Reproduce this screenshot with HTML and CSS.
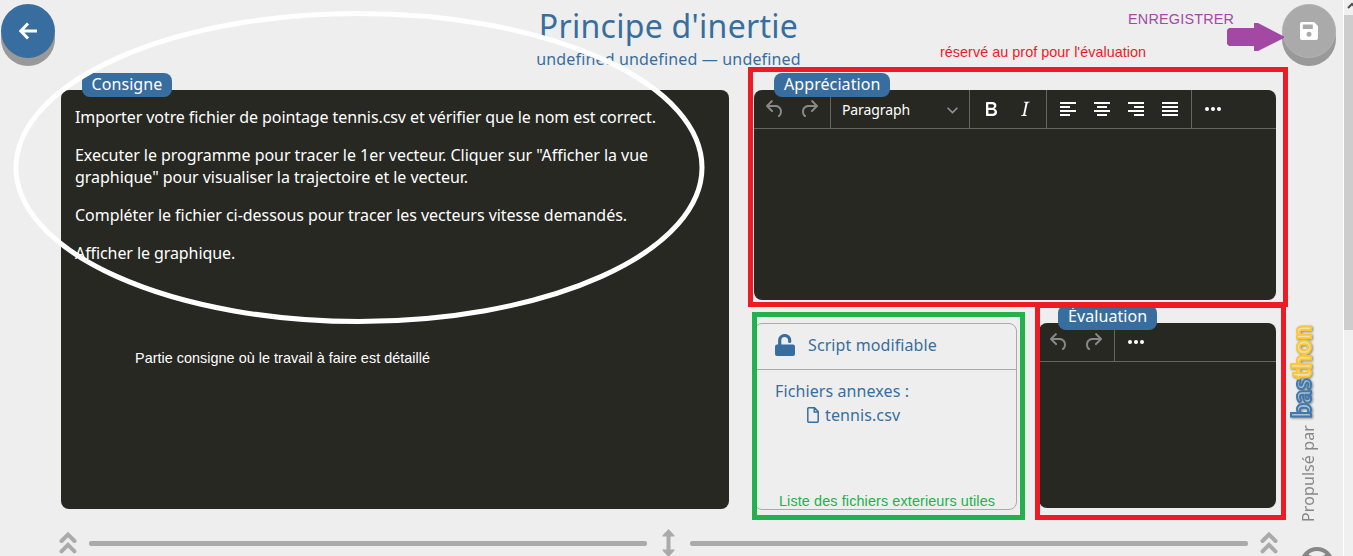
FILE: index.html
```html
<!DOCTYPE html>
<html lang="fr">
<head>
<meta charset="utf-8">
<title>Principe d'inertie</title>
<link rel="stylesheet" href="styles.css">
</head>
<body>
<svg class="defs" width="0" height="0">
  <symbol id="undo" viewBox="0 0 24 24"><path d="M6.4 8H12c3.7 0 6.2 2 6.8 5.1.6 2.7-.4 5.6-2.3 6.8a1 1 0 01-1-1.8c1.1-.6 1.8-2.7 1.4-4.6-.5-2.1-2.1-3.5-4.9-3.5H6.4l3.3 3.3a1 1 0 11-1.4 1.4l-5-5a1 1 0 010-1.4l5-5a1 1 0 011.4 1.4L6.4 8z"/></symbol>
  <symbol id="dots" viewBox="0 0 24 24"><circle cx="6" cy="12" r="2"/><circle cx="12" cy="12" r="2"/><circle cx="18" cy="12" r="2"/></symbol>
  <symbol id="up" viewBox="0 0 18 24"><path d="M2.500 10 9 3.500l6.500 6.500M2.500 20.300 9 13.800l6.500 6.500" fill="none" stroke="#aaa" stroke-width="4" stroke-linecap="round"/></symbol>
</svg>
<div class="page">
  <div class="left-rail">
    <button class="round back" aria-label="Retour"><svg width="20" height="20" viewBox="0 0 20 20"><path d="M10 2.500 2.800 10l7.200 7.500M3 10h16" fill="none" stroke="#fff" stroke-width="3"/></svg></button>
  </div>
  <main class="content">
    <header class="head">
      <h1>Principe d'inertie</h1>
      <p class="who">undefined undefined — undefined</p>
    </header>
    <div class="panels">
      <section class="panel consigne">
        <span class="tag">Consigne</span>
        <p class="tight">Importer votre fichier de pointage tennis.csv et vérifier que le nom est correct.</p>
        <p>Executer le programme pour tracer le 1er vecteur. Cliquer sur "Afficher la vue graphique" pour visualiser la trajectoire et le vecteur.</p>
        <p>Compléter le fichier ci-dessous pour tracer les vecteurs vitesse demandés.</p>
        <p class="tight">Afficher le graphique.</p>
      </section>
      <div class="side">
        <section class="panel appreciation">
          <span class="tag">Appréciation</span>
          <div class="toolbar">
            <div class="group dim"><i><svg><use href="#undo"/></svg></i><i class="flip"><svg><use href="#undo"/></svg></i></div>
            <div class="group select"><span>Paragraph</span><svg class="chev" viewBox="0 0 10 10"><path d="M.5 2.500 5 7l4.500-4.500" fill="none" stroke="#929390" stroke-width="1.500"/></svg></div>
            <div class="group">
              <i><svg viewBox="0 0 24 24"><path d="M7.800 19c-.3 0-.5 0-.6-.2l-.2-.5V5.700c0-.2 0-.4.2-.5l.6-.2h5c1.500 0 2.700.3 3.500 1 .7.6 1.100 1.400 1.100 2.500a3 3 0 01-.6 1.900c-.4.6-1 1-1.600 1.200.4.1.9.3 1.300.6s.8.7 1 1.200c.4.4.5 1 .5 1.600 0 1.300-.4 2.300-1.300 3-.8.7-2.100 1-3.800 1H7.800zm5-8.300c.6 0 1.200-.1 1.600-.5.4-.3.6-.7.6-1.300 0-1.100-.8-1.700-2.300-1.700H9.300v3.500h3.400zm.5 6c.7 0 1.300-.1 1.700-.4.4-.4.6-.9.6-1.500s-.2-1-.7-1.400c-.4-.3-1-.4-2-.4H9.400v3.800h4z"/></svg></i>
              <i><svg viewBox="0 0 24 24"><path d="M16.700 4.700l-.1.9h-.3c-.6 0-1 0-1.400.3-.3.3-.4.6-.5 1.100l-2.100 9.800v.6c0 .5.4.8 1.400.8h.2l-.2.8H8l.2-.8h.2c1.100 0 1.800-.5 2-1.500l2-9.800.1-.5c0-.6-.4-.8-1.400-.8h-.3l.2-.9h5.800z"/></svg></i>
            </div>
            <div class="group">
              <i><svg viewBox="0 0 24 24"><path d="M4 5h16v2H4zM4 9h10v2H4zM4 13h16v2H4zM4 17h10v2H4z"/></svg></i>
              <i><svg viewBox="0 0 24 24"><path d="M4 5h16v2H4zM7 9h10v2H7zM4 13h16v2H4zM7 17h10v2H7z"/></svg></i>
              <i><svg viewBox="0 0 24 24"><path d="M4 5h16v2H4zM10 9h10v2H10zM4 13h16v2H4zM10 17h10v2H10z"/></svg></i>
              <i><svg viewBox="0 0 24 24"><path d="M4 5h16v2H4zM4 9h16v2H4zM4 13h16v2H4zM4 17h16v2H4z"/></svg></i>
            </div>
            <div class="group last"><i><svg><use href="#dots"/></svg></i></div>
          </div>
        </section>
        <div class="lower">
          <section class="script">
            <div class="script-head">
              <svg width="20" height="22" viewBox="0 0 20 22"><rect x="0" y="10.500" width="20" height="11.500" rx="2"/><path d="M4.700 12V6.500a5 5 0 0 1 10 0V7.500" fill="none" stroke="#376e9f" stroke-width="3.200" stroke-linecap="round"/></svg>
              <span>Script modifiable</span>
            </div>
            <div class="files">
              <div>Fichiers annexes :</div>
              <div class="file"><svg width="12" height="16" viewBox="0 0 12 16"><path d="M1.700.8H7.500L11.200 4.500V14.300a.9.9 0 0 1-.9.9H1.700a.9.9 0 0 1-.9-.9V1.700a.9.9 0 0 1 .9-.9zM7.300 1V5H11" fill="none" stroke="#376e9f" stroke-width="1.500"/></svg><span>tennis.csv</span></div>
            </div>
          </section>
          <section class="panel evaluation">
            <span class="tag">Évaluation</span>
            <div class="toolbar">
              <div class="group dim"><i><svg><use href="#undo"/></svg></i><i class="flip"><svg><use href="#undo"/></svg></i></div>
              <div class="group last"><i><svg><use href="#dots"/></svg></i></div>
            </div>
          </section>
        </div>
      </div>
    </div>
    <div class="resizer">
      <svg width="18" height="24"><use href="#up"/></svg>
      <span class="line"></span>
      <svg class="updown" width="13" height="28" viewBox="0 0 13 28"><path d="M6.500 0 12.500 6.500V7.500H8.500V20.500H12.500V21.500L6.500 28 .5 21.500V20.500H4.500V7.500H.5V6.500z" fill="#aaa"/></svg>
      <span class="line"></span>
      <svg width="18" height="24"><use href="#up"/></svg>
    </div>
  </main>
  <aside class="right-rail">
    <button class="round save" aria-label="Enregistrer"><svg width="18" height="18" viewBox="0 0 18 18"><path fill="#fff" fill-rule="evenodd" d="M2 0h12l4 4v12a2 2 0 0 1-2 2H2a2 2 0 0 1-2-2V2a2 2 0 0 1 2-2zM2.800 2.500V7h10V2.500zM9 9.800a2.500 2.500 0 1 0 0 5 2.500 2.500 0 0 0 0-5z"/></svg></button>
    <div class="credit"><span class="by">Propulsé par</span><span class="logo"><b class="bas">bas</b><b class="thon">thon</b></span></div>
    <svg class="help" width="34" height="34" viewBox="0 0 34 34"><circle cx="17" cy="17" r="15" fill="none" stroke="#888" stroke-width="4"/><path d="M2 17V10L9 5V8L12 9L4 17zM32 17V10L25 5V8L22 9L30 17z" fill="#888"/></svg>
  </aside>
  <div class="scrollbar"><svg width="9" height="15" viewBox="0 0 9 15"><path d="M4 8 8 4 12 8" fill="none" stroke="#505050" stroke-width="2"/></svg><div class="thumb"></div></div>
</div>
<svg class="notes" width="1353" height="556" viewBox="0 0 1353 556">
  <g fill="none" stroke-width="5">
    <ellipse cx="359" cy="167.500" rx="343" ry="154" stroke="#fff"/>
    <g shape-rendering="crispEdges">
      <rect x="750.500" y="69.500" width="535" height="235" stroke="#ed1c24"/>
      <path d="M1037.500 305.500H1283.500V517.500H1037.500z" stroke="#ed1c24"/>
      <rect x="754.500" y="314.500" width="268" height="203" stroke="#22b14c"/>
    </g>
  </g>
  <path d="M1229 28H1254V23H1258L1284 36.500V38L1258 51H1254V46H1229L1227 44V30z" fill="#a349a4"/>
  <text x="1128" y="24" fill="#a349a4" textLength="106">ENREGISTRER</text>
  <text x="940" y="57" fill="#ed1c24" textLength="206">réservé au prof pour l'évaluation</text>
  <text x="135" y="363" fill="#fff" textLength="295">Partie consigne où le travail à faire est détaillé</text>
  <text x="779" y="506" fill="#22b14c" textLength="216">Liste des fichiers exterieurs utiles</text>
</svg>
</body>
</html>
```
FILE: styles.css
```css
* { box-sizing: border-box; }
body { margin: 0; background: #eee; font: 16px/22px "Noto Sans", sans-serif; color: #376e9f; overflow: hidden; }
.defs { position: absolute; }
.page { display: grid; grid-template-columns: 61px 1215px 67px 10px; width: 1353px; height: 556px; overflow: hidden; }
.left-rail { padding: 4px 0 0 1px; }
.round { display: flex; align-items: center; justify-content: center; width: 54px; height: 54px; padding: 0; border: 0; border-radius: 50%; box-shadow: 0 8px 0 #999; }
.back { background: #376e9f; }
.save { background: #aaa; border: 1px solid #b2b2b2; }
.content { display: flex; flex-direction: column; }
.head { height: 90px; text-align: center; flex: none; }
h1 { margin: 0; padding-top: 4px; font-size: 32px; line-height: 44px; font-weight: 400; letter-spacing: .28px; }
.who { margin: 0; letter-spacing: .16px; }
.panels { display: grid; grid-template-columns: 668px 522px; column-gap: 25px; height: 420px; flex: none; }
.panel { position: relative; background: #272822; border-radius: 8px; color: #fff; }
.tag { position: absolute; top: -17px; left: 20px; height: 24px; padding: 0 10px; border-radius: 8px; background: #376e9f; line-height: 23px; letter-spacing: .08px; }
.consigne { height: 419px; padding: 16px 14px; }
.consigne .tag { left: 21px; padding: 0 9.5px; }
.consigne p { margin: 0 0 16px; letter-spacing: -.04px; }
.consigne .tight { letter-spacing: -.085px; }
.side { display: grid; grid-template-rows: 210px 187px; row-gap: 23px; }
.toolbar { display: flex; height: 39px; border-bottom: 1px solid #656662; overflow: hidden; }
.group { display: flex; align-items: center; padding: 0 4px; border-right: 1px solid #656662; }
.group.last { border-right: 0; }
.group i { display: flex; width: 34px; justify-content: center; }
.group i svg { width: 24px; height: 24px; fill: #fff; }
.group.dim i svg { fill: #888985; }
.flip { transform: scaleX(-1); }
.select { width: 139px; padding: 2px 11px 0; justify-content: space-between; font-size: 14px; letter-spacing: -.1px; }
.chev { width: 11px; height: 11px; }
.lower { display: grid; grid-template-columns: 263px 237px; column-gap: 22px; }
.script { border: 1px solid #aaa; border-radius: 8px; }
.script-head { display: flex; align-items: center; gap: 13px; height: 46px; padding: 0 0 3px 20px; border-bottom: 1px solid #aaa; fill: #376e9f; letter-spacing: .1px; }
.files { padding: 9px 20px; line-height: 24px; letter-spacing: .1px; }
.file { display: flex; align-items: center; gap: 6px; padding-left: 32px; }
.evaluation { height: 185px; }
.evaluation .tag { left: 19px; top: -18px; height: 25px; }
.evaluation .dim { padding-left: 3px; }
.resizer { display: flex; align-items: center; height: 46px; padding-top: 20px; margin: 0 -2px; flex: none; gap: 12px; }
.resizer svg { flex: none; }
.line { flex: 1; height: 5px; border-radius: 2px; background: #aaa; }
.updown { margin: 0 3px; }
.right-rail { display: flex; flex-direction: column; padding: 4px 0 0 6px; }
.credit { display: flex; align-items: center; writing-mode: vertical-rl; transform: rotate(180deg); width: 34px; height: 200px; margin: 264px 0 0 4px; gap: 7px; flex: none; color: #888; white-space: nowrap; }
.by { line-height: 22px; margin-left: -10px; letter-spacing: .1px; }
.logo { display: flex; margin-left: 5px; font: 900 26px/30px Lato, sans-serif; letter-spacing: -.1px; filter: drop-shadow(-1px -1px 1px #888); }
.bas { color: #a9c4da; -webkit-text-stroke: 2px #4379aa; }
.thon { color: #eee0b5; -webkit-text-stroke: 2px #fbc638; }
.help { margin: 25px 0 0 18px; flex: none; }
.scrollbar { border-left: 1px solid #fff; background: #f0f0f0; }
.scrollbar svg { display: block; }
.thumb { height: 315px; background: #cdcdcd; }
.notes { position: absolute; left: 0; top: 0; font: 14.4px "Liberation Sans", sans-serif; pointer-events: none; }
```
